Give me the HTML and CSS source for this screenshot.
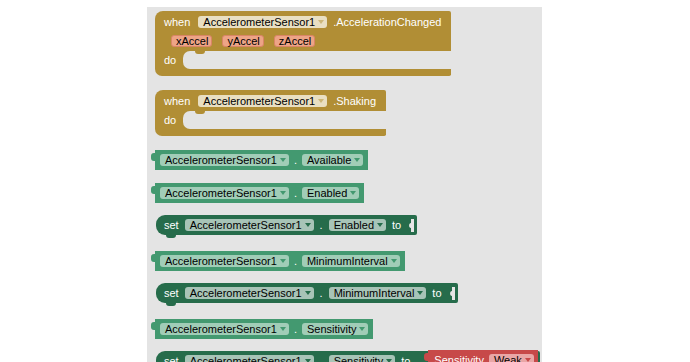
FILE: index.html
```html
<!DOCTYPE html>
<html lang="en">
<head>
<meta charset="UTF-8">
<meta name="viewport" content="width=device-width, initial-scale=1.0">
<title>Accelerometer blocks</title>
<link rel="stylesheet" href="styles.css">
</head>
<body>
<div class="workspace">

  <div class="event">
    <div class="event-head">
      <div class="row">
        <span class="label when">when</span>
        <span class="field">AccelerometerSensor1<i class="arrow"></i></span>
        <span class="label">.AccelerationChanged</span>
      </div>
      <div class="row params">
        <span class="param">xAccel</span>
        <span class="param">yAccel</span>
        <span class="param">zAccel</span>
      </div>
    </div>
    <div class="event-do">
      <span class="label">do</span>
      <div class="slot"><span class="slot-notch"></span></div>
    </div>
    <div class="event-foot"></div>
  </div>

  <div class="event">
    <div class="event-head">
      <div class="row">
        <span class="label when">when</span>
        <span class="field">AccelerometerSensor1<i class="arrow"></i></span>
        <span class="label">.Shaking</span>
      </div>
    </div>
    <div class="event-do">
      <span class="label">do</span>
      <div class="slot"><span class="slot-notch"></span></div>
    </div>
    <div class="event-foot"></div>
  </div>

  <div class="getter">
    <span class="tab"></span>
    <div class="getter-body">
      <span class="field">AccelerometerSensor1<i class="arrow"></i></span>
      <span class="label">.</span>
      <span class="field">Available<i class="arrow"></i></span>
    </div>
  </div>

  <div class="getter">
    <span class="tab"></span>
    <div class="getter-body">
      <span class="field">AccelerometerSensor1<i class="arrow"></i></span>
      <span class="label">.</span>
      <span class="field">Enabled<i class="arrow"></i></span>
    </div>
  </div>

  <div class="setter">
    <div class="setter-body">
      <span class="label">set</span>
      <span class="field">AccelerometerSensor1<i class="arrow"></i></span>
      <span class="label">.</span>
      <span class="field">Enabled<i class="arrow"></i></span>
      <span class="label">to</span>
      <svg class="socket" width="7" height="13" viewBox="0 0 7 13"><path d="M3 0H6V13H3V9C0.5 9 0.5 4 3 4Z" fill="#e6e6e6"/></svg>
    </div>
    <span class="setter-notch"></span>
  </div>

  <div class="getter">
    <span class="tab"></span>
    <div class="getter-body">
      <span class="field">AccelerometerSensor1<i class="arrow"></i></span>
      <span class="label">.</span>
      <span class="field">MinimumInterval<i class="arrow"></i></span>
    </div>
  </div>

  <div class="setter">
    <div class="setter-body">
      <span class="label">set</span>
      <span class="field">AccelerometerSensor1<i class="arrow"></i></span>
      <span class="label">.</span>
      <span class="field">MinimumInterval<i class="arrow"></i></span>
      <span class="label">to</span>
      <svg class="socket" width="7" height="13" viewBox="0 0 7 13"><path d="M3 0H6V13H3V9C0.5 9 0.5 4 3 4Z" fill="#e6e6e6"/></svg>
    </div>
    <span class="setter-notch"></span>
  </div>

  <div class="getter">
    <span class="tab"></span>
    <div class="getter-body">
      <span class="field">AccelerometerSensor1<i class="arrow"></i></span>
      <span class="label">.</span>
      <span class="field">Sensitivity<i class="arrow"></i></span>
    </div>
  </div>

  <div class="setter">
    <div class="setter-body">
      <span class="label">set</span>
      <span class="field">AccelerometerSensor1<i class="arrow"></i></span>
      <span class="label">.</span>
      <span class="field">Sensitivity<i class="arrow"></i></span>
      <span class="label">to</span>
      <div class="helper">
        <span class="tab"></span>
        <div class="helper-body">
          <span class="label">Sensitivity</span>
          <span class="field">Weak<i class="arrow"></i></span>
        </div>
      </div>
    </div>
    <span class="setter-notch"></span>
  </div>

</div>
</body>
</html>
```

FILE: styles.css
```css
body {
  margin: 0;
  background: #fff;
  font-family: "Liberation Sans", Arial, sans-serif;
  font-size: 11px;
}
.workspace {
  box-sizing: border-box;
  width: 395px;
  height: 355px;
  margin: 7px 0 0 147px;
  padding: 4px 0 0 8px;
  background: #e4e4e4;
  overflow: hidden;
  display: flex;
  flex-direction: column;
  align-items: flex-start;
  gap: 13px;
}
.label {
  color: #fff;
  white-space: nowrap;
}
.field {
  display: flex;
  align-items: center;
  gap: 3px;
  height: 12px;
  line-height: 12px;
  padding: 0 3px 0 5px;
  border-radius: 3px;
  color: #000;
  white-space: nowrap;
}
.arrow {
  width: 0;
  height: 0;
  border-left: 3px solid transparent;
  border-right: 3px solid transparent;
  border-top: 4px solid #439970;
}

/* event blocks */
.event {
  display: flex;
  flex-direction: column;
  margin-bottom: 1px;
}
.event-head {
  background: #b18e35;
  border-radius: 8px 2px 0 0;
  padding: 5px 10px 4px 9px;
  display: flex;
  flex-direction: column;
  gap: 7px;
}
.row {
  display: flex;
  align-items: center;
  gap: 6px;
  height: 12px;
}
.when {
  margin-right: 2px;
}
.event .field {
  background: #e9dfc2;
}
.event .arrow {
  border-top-color: #cdb779;
}
.params {
  margin-left: 7px;
  gap: 10px;
}
.param {
  height: 10px;
  line-height: 10px;
  padding: 0 3px 0 4px;
  border: 1px solid #d98566;
  border-radius: 3px;
  background: #eda486;
  color: #000;
}
.event-do {
  display: flex;
  height: 18px;
  background: #b18e35;
}
.event-do .label {
  width: 19px;
  padding-left: 9px;
  line-height: 18px;
}
.slot {
  flex: 1;
  background: #e4e4e4;
  border-radius: 7px 0 0 7px;
}
.slot-notch {
  display: block;
  width: 10px;
  height: 3px;
  margin-left: 12px;
  background: #b18e35;
  border-radius: 0 0 4px 4px;
}
.event-foot {
  height: 7px;
  background: #b18e35;
  border-radius: 0 0 2px 8px;
}

/* getter blocks */
.getter,
.helper {
  display: flex;
  align-items: flex-start;
}
.getter {
  margin-left: -4px;
}
.tab {
  width: 4px;
  height: 8px;
  margin-top: 3px;
  background: #439970;
  border-radius: 3px 0 0 3px;
}
.getter-body {
  height: 20px;
  padding: 0 5px;
  background: #439970;
  display: flex;
  align-items: center;
  gap: 5px;
}
.getter .field {
  background: #a1cdb7;
}

/* setter blocks */
.setter {
  margin: -1px 0 0 1px;
  display: flex;
  flex-direction: column;
  align-items: flex-start;
}
.setter-body {
  height: 20px;
  padding: 0 2px 0 8px;
  background: #266c4b;
  border-radius: 9px 2px 2px 9px;
  display: flex;
  align-items: center;
  gap: 6px;
}
.setter .field {
  background: #a8c4b7;
}
.setter .arrow {
  border-top-color: #266c4b;
}
.socket {
  display: block;
  margin-left: 1px;
}
.setter-notch {
  width: 10px;
  height: 3px;
  margin-left: 10px;
  background: #266c4b;
  border-radius: 0 0 3px 3px;
}

/* helper block */
.helper {
  margin: -3px 0 0 8px;
}
.helper .tab {
  background: #c74949;
}
.helper-body {
  height: 20px;
  padding: 0 4px 0 6px;
  background: #c74949;
  display: flex;
  align-items: center;
  gap: 5px;
}
.helper .field {
  background: #e9a6a6;
}
.helper .arrow {
  border-top-color: #c74949;
}
```
